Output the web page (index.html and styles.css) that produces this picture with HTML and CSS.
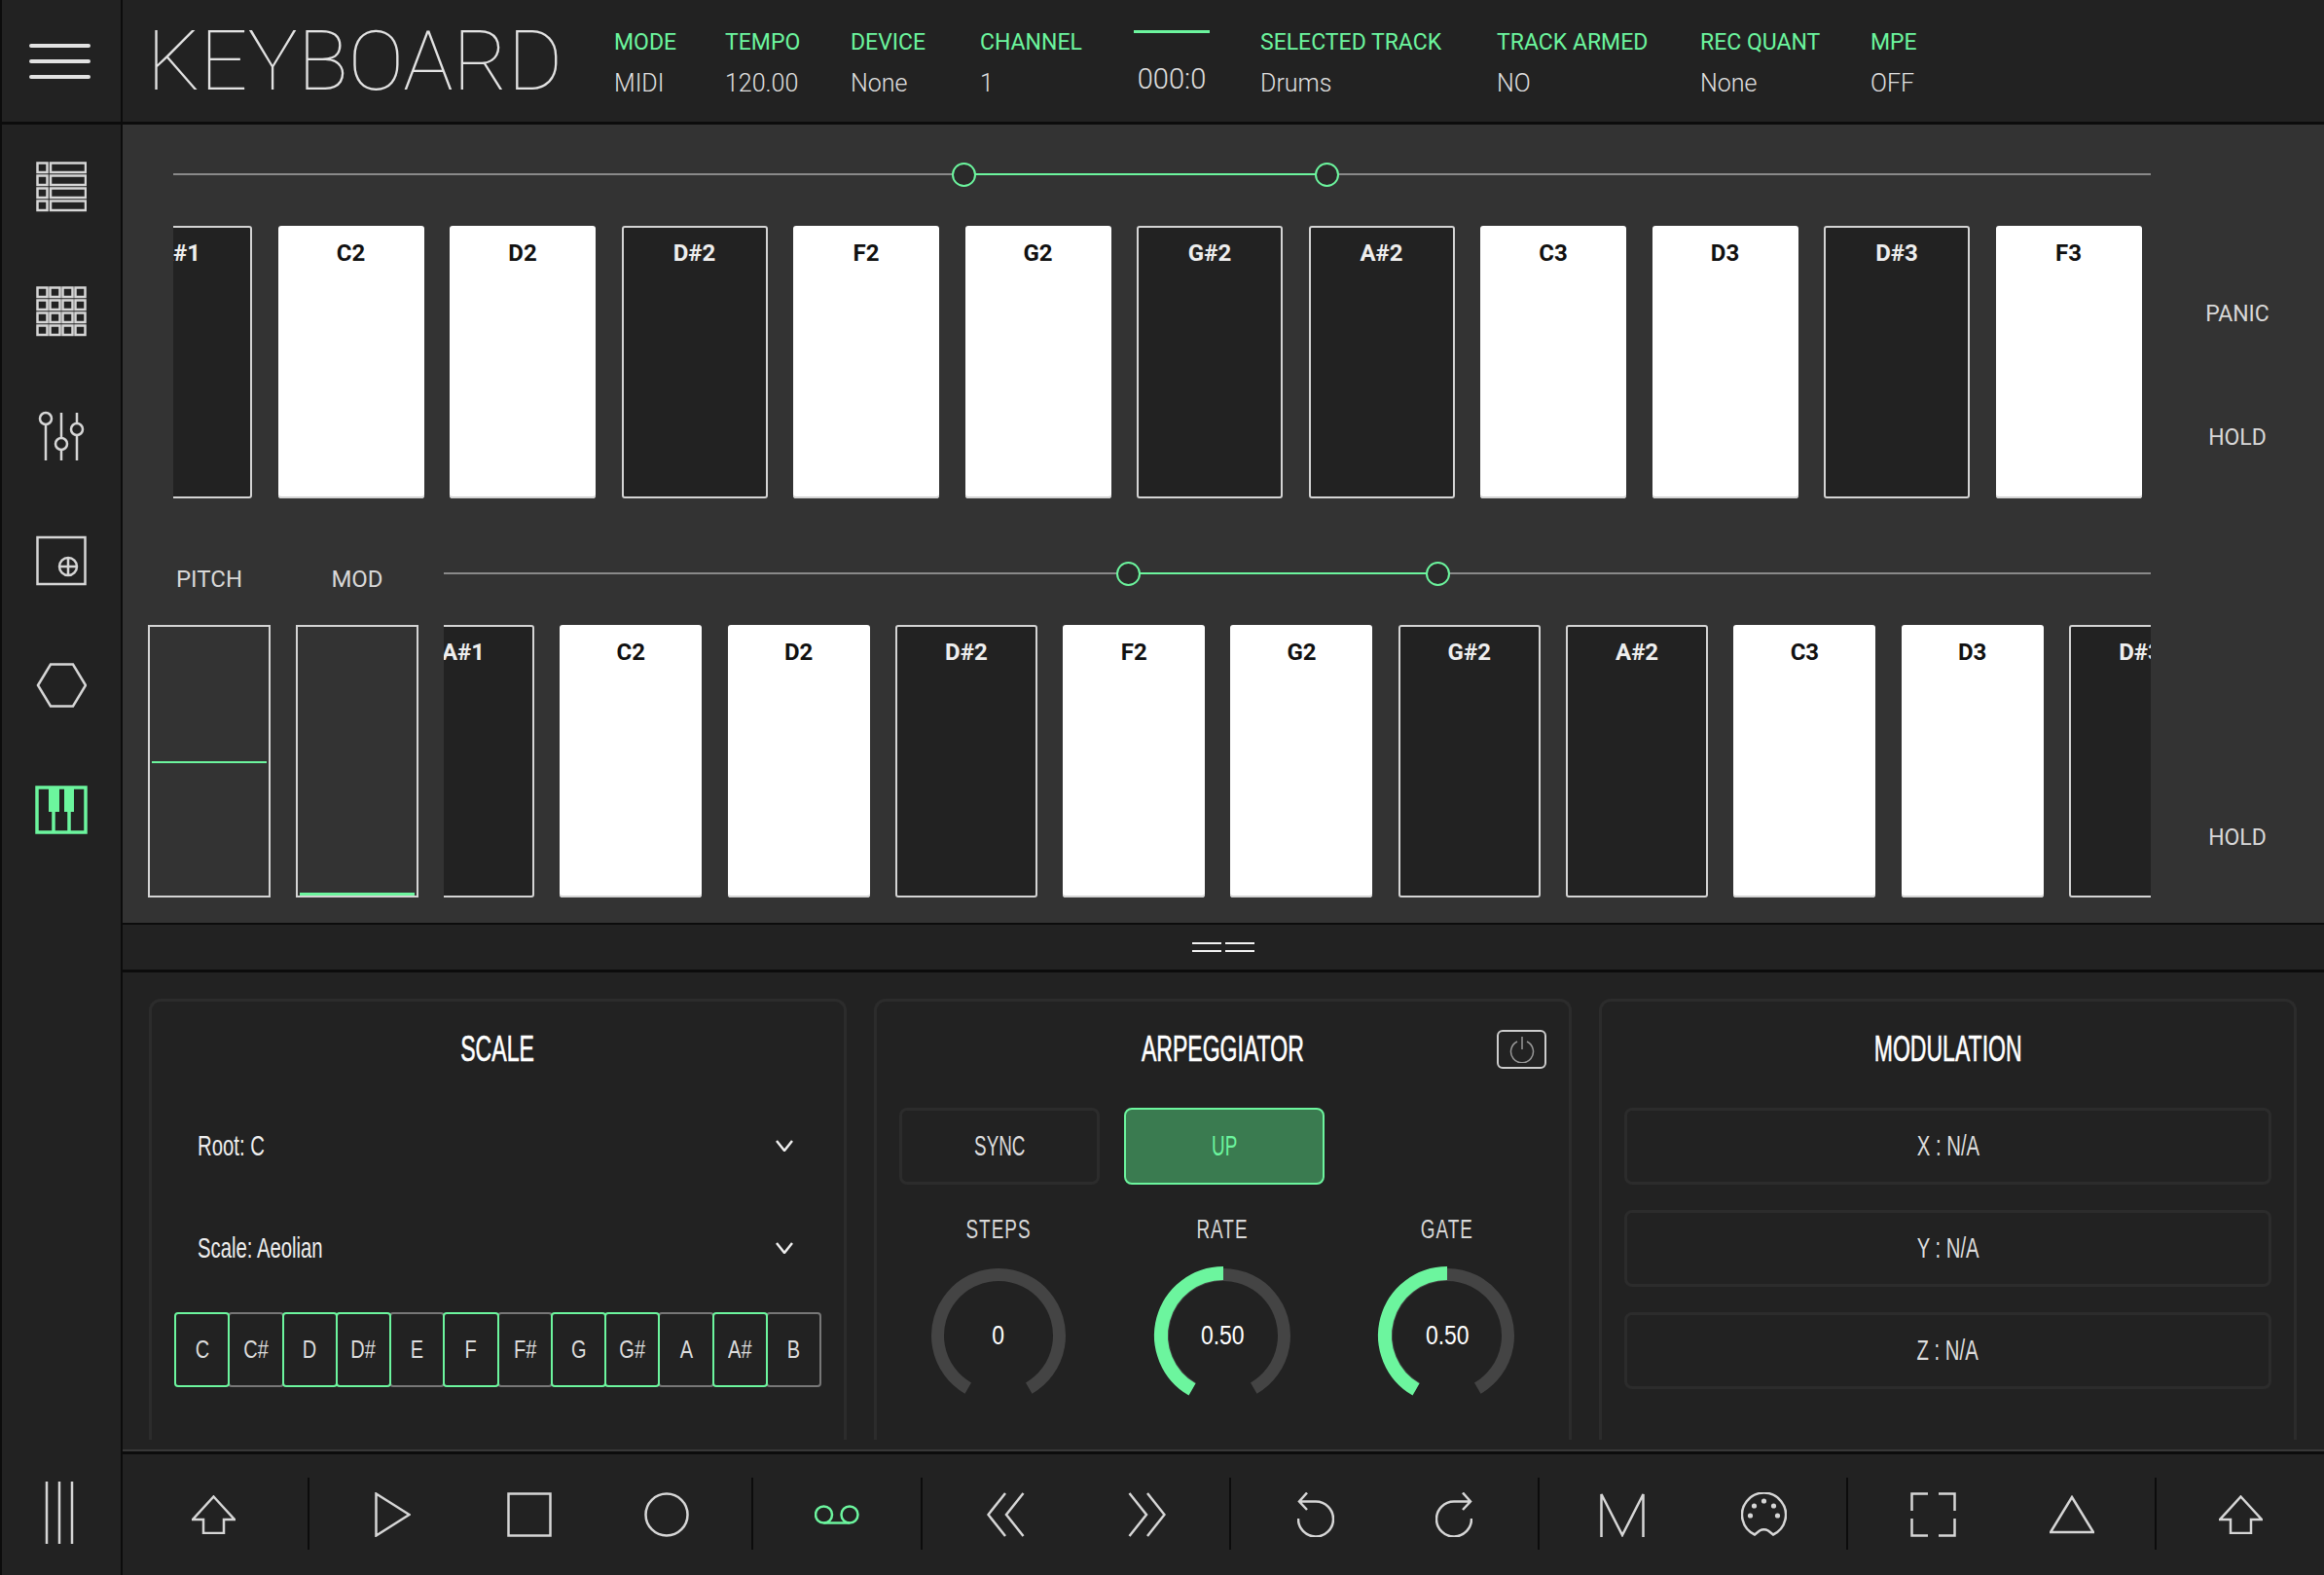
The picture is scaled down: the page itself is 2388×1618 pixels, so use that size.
FILE: index.html
```html
<!DOCTYPE html>
<html>
<head lang="en">
	<meta charset="UTF-8">
	<title>Keyboard</title>
	<link rel="stylesheet" href="styles.css">
</head>
<body>
<div class="app">

	<aside class="rail">
		<div class="burger"><i></i><i></i><i></i></div>
		<div class="rail-btn">
			<svg class="ico" width="52" height="52" viewBox="0 0 52 52">
				<rect x="1.5" y="1.5" width="10" height="9.5"/><rect x="15" y="1.5" width="36" height="9.5"/>
				<rect x="1.5" y="14.5" width="10" height="9.5"/><rect x="15" y="14.5" width="36" height="9.5"/>
				<rect x="1.5" y="27.5" width="10" height="9.5"/><rect x="15" y="27.5" width="36" height="9.5"/>
				<rect x="1.5" y="40.5" width="10" height="9.5"/><rect x="15" y="40.5" width="36" height="9.5"/>
			</svg>
		</div>
		<div class="rail-btn">
			<svg class="ico" width="52" height="52" viewBox="0 0 52 52">
				<rect x="1.5" y="1.5" width="10" height="9.5"/><rect x="14.5" y="1.5" width="10" height="9.5"/><rect x="27.5" y="1.5" width="10" height="9.5"/><rect x="40.5" y="1.5" width="10" height="9.5"/>
				<rect x="1.5" y="14.5" width="10" height="9.5"/><rect x="14.5" y="14.5" width="10" height="9.5"/><rect x="27.5" y="14.5" width="10" height="9.5"/><rect x="40.5" y="14.5" width="10" height="9.5"/>
				<rect x="1.5" y="27.5" width="10" height="9.5"/><rect x="14.5" y="27.5" width="10" height="9.5"/><rect x="27.5" y="27.5" width="10" height="9.5"/><rect x="40.5" y="27.5" width="10" height="9.5"/>
				<rect x="1.5" y="40.5" width="10" height="9.5"/><rect x="14.5" y="40.5" width="10" height="9.5"/><rect x="27.5" y="40.5" width="10" height="9.5"/><rect x="40.5" y="40.5" width="10" height="9.5"/>
			</svg>
		</div>
		<div class="rail-btn">
			<svg class="ico" width="52" height="52" viewBox="0 0 52 52">
				<circle cx="10" cy="8" r="6"/><path d="M10 14V51"/>
				<path d="M26 2V28"/><circle cx="26" cy="34" r="6"/><path d="M26 40V51"/>
				<path d="M42 2V13"/><circle cx="42" cy="19" r="6"/><path d="M42 25V51"/>
			</svg>
		</div>
		<div class="rail-btn">
			<svg class="ico" width="52" height="52" viewBox="0 0 52 52">
				<rect x="1.5" y="2" width="49" height="48"/>
				<circle cx="33" cy="32" r="9"/><path d="M24 32H42M33 23V41"/>
			</svg>
		</div>
		<div class="rail-btn">
			<svg class="ico" width="52" height="52" viewBox="0 0 52 52">
				<path d="M2 26L15 4.5H38L51 26L38 47.5H15Z"/>
			</svg>
		</div>
		<div class="rail-btn">
			<svg class="ico-on piano" width="54" height="52" viewBox="0 0 54 52">
				<rect x="2" y="3" width="50" height="46"/>
				<path class="fill" d="M14 3H25V28H14ZM30 3H40V28H30Z"/>
				<path d="M19 28V49M35 28V49"/>
			</svg>
		</div>
		<div class="rail-btn rail-end">
			<svg class="ico" width="30" height="64" viewBox="0 0 30 64">
				<path d="M2 0V64M15 0V64M28 0V64"/>
			</svg>
		</div>
	</aside>

	<main class="main">
		<header class="topbar">
			<h1 class="logo">KEYBOARD</h1>
			<div class="stats">
				<div class="stat"><span>MODE</span><b>MIDI</b></div>
				<div class="stat"><span>TEMPO</span><b>120.00</b></div>
				<div class="stat"><span>DEVICE</span><b>None</b></div>
				<div class="stat"><span>CHANNEL</span><b>1</b></div>
				<div class="clock"><i></i><b>000:0</b></div>
				<div class="stat"><span>SELECTED TRACK</span><b>Drums</b></div>
				<div class="stat"><span>TRACK ARMED</span><b>NO</b></div>
				<div class="stat"><span>REC QUANT</span><b>None</b></div>
				<div class="stat"><span>MPE</span><b>OFF</b></div>
			</div>
		</header>

		<section class="stage">
			<div class="deck deck-top">
				<div class="kb">
					<div class="range"><i class="sel sel-top"></i></div>
					<div class="keys keys-top">
						<div class="key dark">A#1</div>
						<div class="key">C2</div>
						<div class="key">D2</div>
						<div class="key dark">D#2</div>
						<div class="key">F2</div>
						<div class="key">G2</div>
						<div class="key dark">G#2</div>
						<div class="key dark">A#2</div>
						<div class="key">C3</div>
						<div class="key">D3</div>
						<div class="key dark">D#3</div>
						<div class="key">F3</div>
					</div>
				</div>
				<div class="side">
					<div>PANIC</div>
					<div>HOLD</div>
				</div>
			</div>

			<div class="deck deck-low">
				<div class="strips">
					<div class="strip-col">
						<label>PITCH</label>
						<div class="strip strip-mid"><i></i></div>
					</div>
					<div class="strip-col">
						<label>MOD</label>
						<div class="strip strip-low"><i></i></div>
					</div>
				</div>
				<div class="kb kb-low">
					<div class="range"><i class="sel sel-low"></i></div>
					<div class="keys keys-low">
						<div class="key dark">A#1</div>
						<div class="key">C2</div>
						<div class="key">D2</div>
						<div class="key dark">D#2</div>
						<div class="key">F2</div>
						<div class="key">G2</div>
						<div class="key dark">G#2</div>
						<div class="key dark">A#2</div>
						<div class="key">C3</div>
						<div class="key">D3</div>
						<div class="key dark">D#3</div>
					</div>
				</div>
				<div class="side">
					<div></div>
					<div>HOLD</div>
				</div>
			</div>
		</section>

		<div class="grip"><i></i><i></i></div>

		<section class="panels">
			<div class="panel">
				<h2 class="panel-title"><span class="cond">SCALE</span></h2>
				<div class="select"><span class="cond">Root: C</span><svg class="chev" width="18" height="12" viewBox="0 0 18 12"><path d="M1 1L9 11L17 1"/></svg></div>
				<div class="select"><span class="cond">Scale: Aeolian</span><svg class="chev" width="18" height="12" viewBox="0 0 18 12"><path d="M1 1L9 11L17 1"/></svg></div>
				<div class="notes">
					<div class="note on"><span class="cond">C</span></div>
					<div class="note"><span class="cond">C#</span></div>
					<div class="note on"><span class="cond">D</span></div>
					<div class="note on"><span class="cond">D#</span></div>
					<div class="note"><span class="cond">E</span></div>
					<div class="note on"><span class="cond">F</span></div>
					<div class="note"><span class="cond">F#</span></div>
					<div class="note on"><span class="cond">G</span></div>
					<div class="note on"><span class="cond">G#</span></div>
					<div class="note"><span class="cond">A</span></div>
					<div class="note on"><span class="cond">A#</span></div>
					<div class="note"><span class="cond">B</span></div>
				</div>
			</div>

			<div class="panel">
				<h2 class="panel-title"><span class="cond">ARPEGGIATOR</span>
					<div class="power">
						<svg width="26" height="28" viewBox="0 0 26 28"><path d="M8 6A11.5 11.5 0 1 0 18 6M13 1V14"/></svg>
					</div>
				</h2>
				<div class="arp-btns">
					<div class="btn"><span class="cond">SYNC</span></div>
					<div class="btn btn-on"><span class="cond">UP</span></div>
				</div>
				<div class="knobs">
					<div class="knob">
						<label><span class="cond">STEPS</span></label>
						<div class="dial">
							<svg width="150" height="150" viewBox="0 0 150 150"><path class="track" d="M43.75 129.13A62.5 62.5 0 1 1 106.25 129.13"/></svg>
							<span class="dial-val"><span class="cond">0</span></span>
						</div>
					</div>
					<div class="knob">
						<label><span class="cond">RATE</span></label>
						<div class="dial">
							<svg width="150" height="150" viewBox="0 0 150 150"><path class="track" d="M43.75 129.13A62.5 62.5 0 1 1 106.25 129.13"/><path class="level" d="M43 130.43A64 64 0 0 1 75 11"/></svg>
							<span class="dial-val"><span class="cond">0.50</span></span>
						</div>
					</div>
					<div class="knob">
						<label><span class="cond">GATE</span></label>
						<div class="dial">
							<svg width="150" height="150" viewBox="0 0 150 150"><path class="track" d="M43.75 129.13A62.5 62.5 0 1 1 106.25 129.13"/><path class="level" d="M43 130.43A64 64 0 0 1 75 11"/></svg>
							<span class="dial-val"><span class="cond">0.50</span></span>
						</div>
					</div>
				</div>
			</div>

			<div class="panel">
				<h2 class="panel-title"><span class="cond">MODULATION</span></h2>
				<div class="mods">
					<div class="btn"><span class="cond">X : N/A</span></div>
					<div class="btn"><span class="cond">Y : N/A</span></div>
					<div class="btn"><span class="cond">Z : N/A</span></div>
				</div>
			</div>
		</section>

		<footer class="transport">
			<div class="tgroup tg-first">
				<div class="tbtn"><svg class="ico" width="45" height="40" viewBox="0 0 45 40"><path d="M22.5 1.5L44 25H33V39H12V25H1Z"/></svg></div>
			</div>
			<div class="tgroup tg-three">
				<div class="tbtn"><svg class="ico" width="37" height="46" viewBox="0 0 37 46"><path d="M1.5 1.5L35.5 23L1.5 44.5Z"/></svg></div>
				<div class="tbtn"><svg class="ico" width="46" height="46" viewBox="0 0 46 46"><rect x="1.5" y="1.5" width="43" height="43"/></svg></div>
				<div class="tbtn"><svg class="ico" width="46" height="46" viewBox="0 0 46 46"><circle cx="23" cy="23" r="21.5"/></svg></div>
			</div>
			<div class="tgroup tg-one">
				<div class="tbtn"><svg class="ico-on" width="46" height="20" viewBox="0 0 46 20"><circle cx="9.5" cy="10" r="8.5"/><circle cx="36" cy="10" r="8.5"/><path d="M9.5 18.5H36"/></svg></div>
			</div>
			<div class="tgroup tg-wide">
				<div class="tbtn"><svg class="ico" width="39" height="46" viewBox="0 0 39 46"><path d="M19 1L1.5 23L19 45M37.5 1L20 23L37.5 45"/></svg></div>
				<div class="tbtn"><svg class="ico" width="39" height="46" viewBox="0 0 39 46"><path d="M1.5 1L19 23L1.5 45M20 1L37.5 23L20 45"/></svg></div>
			</div>
			<div class="tgroup">
				<div class="tbtn"><svg class="ico" width="38" height="46" viewBox="0 0 38 46"><path d="M10 .5L2 9.5L10 18M2 9.5H19A18 18 0 1 1 1 27"/></svg></div>
				<div class="tbtn"><svg class="ico" width="38" height="46" viewBox="0 0 38 46"><path d="M28 .5L36 9.5L28 18M36 9.5H19A18 18 0 1 0 37 27"/></svg></div>
			</div>
			<div class="tgroup tg-wide">
				<div class="tbtn"><svg class="ico" width="46" height="46" viewBox="0 0 46 46"><path d="M1.5 46V2L23 44L44.5 2V46"/></svg></div>
				<div class="tbtn">
					<svg class="ico" width="47" height="46" viewBox="0 0 47 46">
						<path d="M14 43.5A22.5 22.5 0 1 1 33 43.5L28 39.5Q23.5 37 19 39.5Z"/>
						<circle class="dot" cx="9.5" cy="24" r="2.6"/><circle class="dot" cx="13.5" cy="14" r="2.6"/><circle class="dot" cx="23.5" cy="9" r="2.6"/><circle class="dot" cx="33.5" cy="14" r="2.6"/><circle class="dot" cx="37.5" cy="24" r="2.6"/>
					</svg>
				</div>
			</div>
			<div class="tgroup tg-nudge">
				<div class="tbtn"><svg class="ico" width="47" height="46" viewBox="0 0 47 46"><path d="M18 1.5H1.5V19M29 1.5H45.5V19M1.5 27V44.5H18M45.5 27V44.5H29"/></svg></div>
				<div class="tbtn"><svg class="ico" width="46" height="40" viewBox="0 0 46 40"><path d="M23 2L45 38H1Z"/></svg></div>
			</div>
			<div class="tgroup tg-last tg-nudge">
				<div class="tbtn"><svg class="ico" width="45" height="40" viewBox="0 0 45 40"><path d="M22.5 1.5L44 25H33V39H12V25H1Z"/></svg></div>
			</div>
		</footer>
	</main>
</div>
</body>
</html>
```

FILE: styles.css
```css
*, *::before, *::after {
	box-sizing: border-box;
	margin: 0;
	padding: 0;
}

html, body {
	height: 100%;
}

body {
	background: #222;
	color: #ddd;
	font-family: Roboto, "Liberation Sans", sans-serif;
	overflow: hidden;
}

.app {
	display: flex;
	width: 2388px;
	height: 1618px;
}

/* svg icons */
.ico, .ico-on {
	fill: none;
	stroke: #d6d6d6;
	stroke-width: 2.5;
	display: block;
}

.ico .dot {
	fill: #d6d6d6;
	stroke: none;
}

.ico-on {
	stroke: #6cf59e;
}

.ico-on .fill {
	fill: #6cf59e;
	stroke: none;
}

.piano {
	stroke-width: 3.5;
}

/* left rail */
.rail {
	flex: 0 0 126px;
	display: flex;
	flex-direction: column;
	border-left: 2px solid #0c0c0c;
	border-right: 2px solid #0c0c0c;
}

.burger {
	flex: 0 0 128px;
	display: flex;
	flex-direction: column;
	align-items: center;
	justify-content: center;
	gap: 12px;
	padding-right: 3px;
	border-bottom: 3px solid #0c0c0c;
}

.burger i {
	width: 63px;
	height: 4px;
	border-radius: 2px;
	background: #e2e2e2;
}

.rail-btn {
	flex: 0 0 128px;
	display: flex;
	align-items: center;
	justify-content: center;
}

.rail-end {
	margin-top: auto;
	padding-right: 4px;
}

/* top bar */
.main {
	flex: 1;
	display: flex;
	flex-direction: column;
	min-width: 0;
}

.topbar {
	flex: 0 0 128px;
	display: flex;
	border-bottom: 3px solid #0c0c0c;
	padding-left: 25px;
}

.logo {
	flex: 0 0 480px;
	padding-top: 1px;
	font-size: 86px;
	font-weight: 100;
	line-height: 124px;
	color: #e2e2e2;
}

.stats {
	display: grid;
	grid-template-columns: 114px 129px 133px 158px 130px 243px 209px 175px auto;
	align-items: start;
}

.stat span, .stat b {
	display: block;
}

.stat span {
	font-size: 23px;
	color: #6cf59e;
	margin-top: 30px;
	line-height: 27px;
}

.stat b {
	font-size: 25px;
	font-weight: 300;
	color: #e0e0e0;
	margin-top: 15px;
	line-height: 27px;
}

.clock {
	width: 78px;
	text-align: center;
	padding-top: 31px;
}

.clock i {
	display: block;
	height: 3px;
	background: #6cf59e;
}

.clock b {
	display: block;
	margin-top: 33px;
	font-size: 29px;
	font-weight: 300;
	line-height: 28px;
	color: #e0e0e0;
}

/* keyboards */
.stage {
	flex: 0 0 822px;
	background: #333;
	padding-top: 39px;
	border-bottom: 2px solid #0c0c0c;
}

.deck {
	display: flex;
}

.deck-top {
	padding-left: 52px;
}

.deck-low {
	margin-top: 64px;
	padding-left: 26px;
}

.kb {
	flex: 0 0 2032px;
	min-width: 0;
}

.kb-low {
	flex-basis: 1754px;
	margin-left: 26px;
}

.range {
	position: relative;
	height: 25px;
	margin-bottom: 40px;
}

.range::before {
	content: "";
	position: absolute;
	left: 0;
	right: 0;
	top: 11px;
	height: 2px;
	background: #8a8a8a;
}

.sel {
	position: absolute;
	top: 11px;
	height: 2px;
	background: #6cf59e;
}

.sel-top {
	left: 812px;
	width: 374px;
}

.sel-low {
	left: 703px;
	width: 319px;
}

.sel::before, .sel::after {
	content: "";
	position: absolute;
	top: -11.5px;
	width: 25px;
	height: 25px;
	border: 2px solid #6cf59e;
	border-radius: 50%;
	background: #2a2a2a;
}

.sel::before {
	left: -12px;
}

.sel::after {
	right: -12px;
}

.keys {
	display: flex;
	overflow: hidden;
	height: 280px;
	gap: 26.5px;
	font-weight: 700;
	font-size: 24px;
}

.keys-top .key:first-child {
	margin-left: -69px;
}

.keys-low {
	gap: 26.3px;
}

.keys-low .key {
	flex-basis: 146px;
}

.keys-low .key:first-child {
	margin-left: -53px;
}

.key {
	flex: 0 0 150px;
	padding-top: 13px;
	line-height: 30px;
	text-align: center;
	background: #fff;
	color: #111;
	border-radius: 3px;
	box-shadow: inset 0 -2px 0 #d4d4d4;
}

.key.dark {
	background: #222;
	color: #eee;
	border: 2px solid #d4d4d4;
	padding-top: 11px;
	box-shadow: none;
}

.side {
	flex: 1;
	display: grid;
	grid-template-rows: 127px 127px;
	padding-top: 92px;
	font-size: 23px;
	text-align: center;
	color: #d8d8d8;
}

.deck-low .side {
	padding-top: 93px;
}

.side div {
	display: flex;
	align-items: center;
	justify-content: center;
}

.strips {
	display: flex;
	gap: 26px;
}

.strip-col {
	width: 126px;
}

.strip-col label {
	display: block;
	height: 37px;
	line-height: 37px;
	margin-bottom: 28px;
	text-align: center;
	font-size: 24px;
	color: #d8d8d8;
}

.strip {
	position: relative;
	height: 280px;
	border: 2px solid #d4d4d4;
}

.strip i {
	position: absolute;
	left: 2px;
	right: 2px;
	height: 2px;
	background: #6cf59e;
}

.strip-mid i {
	top: 138px;
}

.strip-low i {
	bottom: 0;
	height: 3px;
}

/* divider */
.grip {
	flex: 0 0 49px;
	display: flex;
	justify-content: center;
	align-items: center;
	gap: 4px;
	border-bottom: 3px solid #0c0c0c;
}

.grip i {
	width: 30px;
	height: 10px;
	border-top: 2px solid #f2f2f2;
	border-bottom: 2px solid #f2f2f2;
}

/* bottom panels */
.panels {
	flex: 0 0 495px;
	display: flex;
	gap: 28px;
	padding: 27px 28px 12px 27px;
	border-bottom: 3px solid #0c0c0c;
	box-shadow: inset 0 -2px 0 #383838;
}

.panel {
	flex: 1 1 0;
	min-width: 0;
	padding: 24px 23px 0;
	border: 3px solid #2c2c2c;
	border-bottom: 0;
	border-radius: 12px 12px 0 0;
}

.panel-title {
	position: relative;
	height: 50px;
	margin-bottom: 35px;
	text-align: center;
	font-size: 36px;
	font-weight: 400;
	line-height: 50px;
	color: #fff;
	-webkit-text-stroke: .6px #fff;
}

.cond {
	display: inline-block;
	font-family: "Liberation Sans", sans-serif;
	transform: scaleX(.7);
}

.panel-title .cond {
	transform: scaleX(.64);
}

.power {
	position: absolute;
	right: 0;
	top: 5px;
	width: 51px;
	height: 40px;
	display: flex;
	align-items: center;
	justify-content: center;
	border: 2px solid #ccc;
	border-radius: 6px;
}

.power svg {
	fill: none;
	stroke: #999;
	stroke-width: 1.5;
}

.select {
	height: 78px;
	margin-bottom: 27px;
	display: flex;
	align-items: center;
	justify-content: space-between;
	padding: 0 29px 0 24px;
	font-size: 29px;
	color: #eee;
}

.select .cond {
	transform-origin: left center;
}

.chev {
	fill: none;
	stroke: #eee;
	stroke-width: 2.5;
}

.notes {
	display: flex;
	height: 77px;
}

.note {
	flex: 1;
	display: flex;
	align-items: center;
	justify-content: center;
	margin-right: -2px;
	border: 2px solid #777;
	border-radius: 4px;
	font-size: 25px;
	color: #ddd;
}

.note .cond {
	transform: scaleX(.8);
}

.note:last-child {
	margin-right: 0;
}

.note.on {
	border-color: #6cf59e;
	position: relative;
}

.btn {
	height: 79px;
	display: flex;
	align-items: center;
	justify-content: center;
	border: 3px solid #2c2c2c;
	border-radius: 8px;
	font-size: 29px;
	color: #ddd;
}

.arp-btns {
	display: flex;
	gap: 25px;
}

.arp-btns .btn {
	flex: 0 0 206px;
}

.arp-btns .cond {
	transform: scaleX(.65);
}

.btn-on {
	background: #3a7b50;
	border: 2px solid #6cf59e;
	color: #6cf59e;
}

.mods {
	display: flex;
	flex-direction: column;
	gap: 26px;
}

.knobs {
	display: grid;
	grid-template-columns: repeat(3, 230.5px);
	justify-content: center;
	margin-top: 28px;
}

.knob {
	display: flex;
	flex-direction: column;
	align-items: center;
}

.knob label {
	height: 36px;
	line-height: 36px;
	margin-bottom: 16px;
	font-size: 27px;
	letter-spacing: 1.5px;
	color: #d8d8d8;
}

.dial {
	position: relative;
	width: 150px;
	height: 150px;
}

.dial svg {
	display: block;
	fill: none;
}

.dial .track {
	stroke: #444;
	stroke-width: 13;
}

.dial .level {
	stroke: #6cf59e;
	stroke-width: 14;
}

.dial-val {
	position: absolute;
	inset: 0;
	display: flex;
	align-items: center;
	justify-content: center;
	font-size: 27px;
	color: #fff;
}

.dial-val .cond {
	transform: scaleX(.85);
}

/* transport */
.transport {
	flex: 1;
	display: flex;
}

.tgroup {
	flex: 0 0 317px;
	height: 124px;
	display: flex;
	align-items: center;
	justify-content: center;
	position: relative;
}

.tgroup::after {
	content: "";
	position: absolute;
	right: -1px;
	top: 24px;
	height: 74px;
	width: 2px;
	background: #0c0c0c;
}

.tg-first {
	flex-basis: 191px;
	padding-right: 5px;
}

.tg-three {
	flex-basis: 456px;
	padding-right: 2px;
}

.tg-three .tbtn {
	flex-basis: 141px;
}

.tg-one {
	flex-basis: 174px;
}

.tg-last {
	flex-basis: 173px;
}

.tg-last::after {
	display: none;
}

.tbtn {
	flex: 0 0 142px;
	display: flex;
	justify-content: center;
	align-items: center;
}

.tg-wide .tbtn {
	flex-basis: 145px;
}

.tg-nudge {
	padding-left: 2px;
}
```
